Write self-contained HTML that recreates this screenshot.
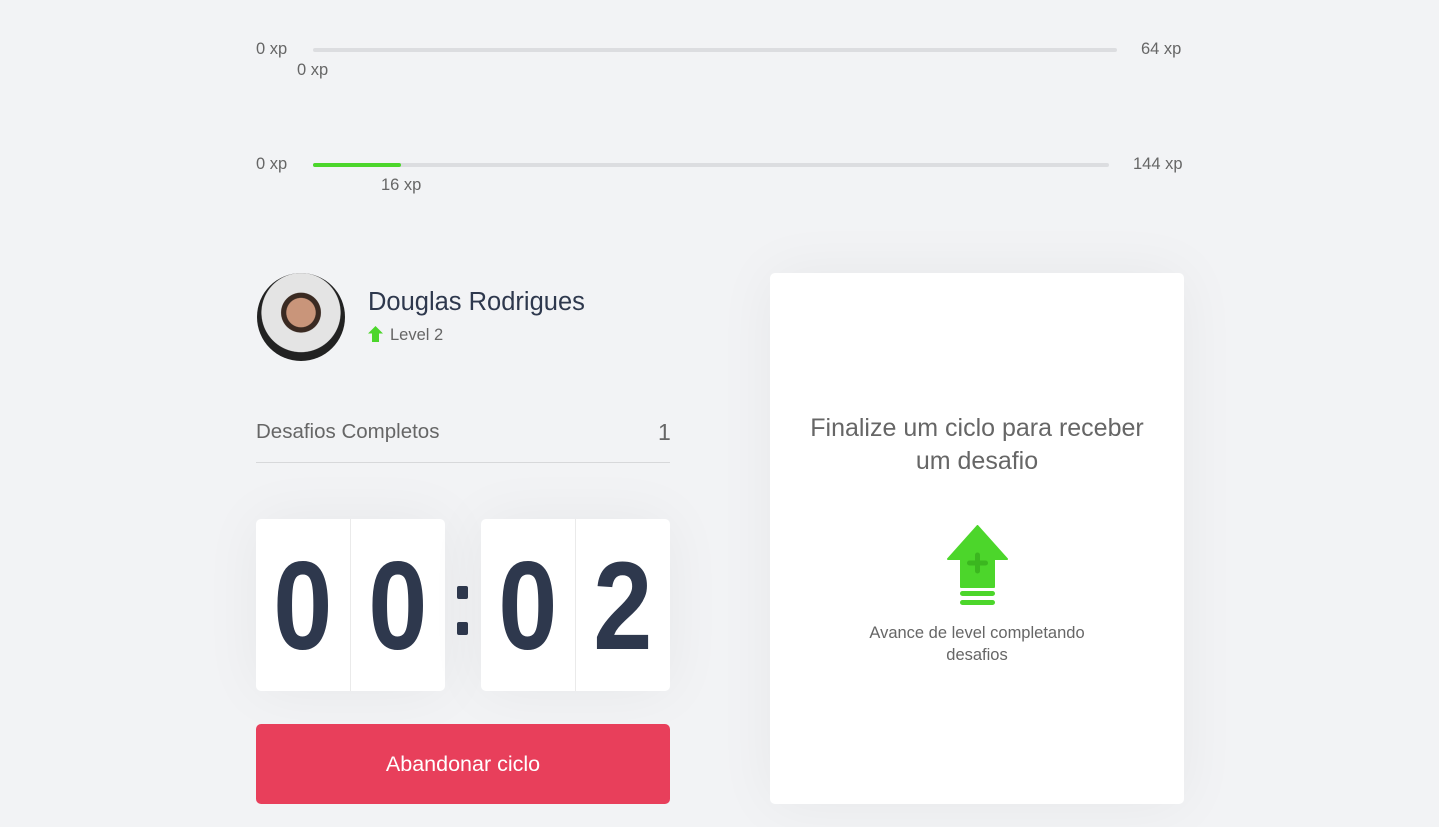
<!DOCTYPE html>
<html><head><style>
body{margin:0;background:#f2f3f5;font-family:"Liberation Sans",sans-serif;color:#666;width:1439px;height:827px;overflow:hidden;position:relative}
.a{position:absolute}
.bar{position:absolute;height:4px;background:#dcdde0;border-radius:4px}
.t{font-size:16.5px;color:#666}
.box{position:absolute;top:519px;width:189px;height:172px;background:#fff;border-radius:5px;box-shadow:0 0 60px rgba(0,0,0,0.05);display:flex;font-size:125px;color:#2e384d;font-weight:bold}
.box span{flex:1;text-align:center;line-height:176px;display:block}
.box span i{display:inline-block;font-style:normal;transform:scaleX(0.85)}
.box span:first-child{border-right:1px solid #eaeaea}
</style></head><body>
<div class="a t" style="left:256px;top:40px">0 xp</div>
<div class="bar" style="left:313px;top:48px;width:804px"></div>
<div class="a t" style="left:1141px;top:40px">64 xp</div>
<div class="a t" style="left:297px;top:61px">0 xp</div>

<div class="a t" style="left:256px;top:155px">0 xp</div>
<div class="bar" style="left:313px;top:163px;width:796px"></div>
<div class="bar" style="left:313px;top:163px;width:88px;background:#4cd62b"></div>
<div class="a t" style="left:1133px;top:155px">144 xp</div>
<div class="a t" style="left:381px;top:176px">16 xp</div>

<div class="a" style="left:257px;top:273px;width:88px;height:88px;border-radius:50%;background:radial-gradient(circle at 50% 45%,#c9957a 0 22%,#3a2a22 23% 30%,#e4e4e4 31% 60%,#222 61%)"></div>
<div class="a" style="left:368px;top:288px;font-size:25.5px;color:#2e384d">Douglas Rodrigues</div>
<svg class="a" style="left:368px;top:326px" width="15" height="16" viewBox="0 0 15 16"><path d="M7.5 0L15 7.5H11V16H4V7.5H0Z" fill="#4cd62b"/></svg>
<div class="a" style="left:390px;top:326px;font-size:16.5px;color:#666">Level 2</div>

<div class="a" style="left:256px;top:420px;font-size:20.5px;color:#666">Desafios Completos</div>
<div class="a" style="left:658px;top:419px;font-size:23px;color:#666">1</div>
<div class="a" style="left:256px;top:462px;width:414px;height:1px;background:#d7d8da"></div>

<div class="box" style="left:256px"><span><i>0</i></span><span><i>0</i></span></div>
<div class="a" style="left:457px;top:586px;width:11px;height:13px;background:#2e384d;border-radius:2px"></div>
<div class="a" style="left:457px;top:622px;width:11px;height:13px;background:#2e384d;border-radius:2px"></div>
<div class="box" style="left:481px"><span><i>0</i></span><span><i>2</i></span></div>

<div class="a" style="left:256px;top:724px;width:414px;height:80px;background:#e83f5b;border-radius:5px;color:#fff;font-size:21.5px;text-align:center;line-height:80px">Abandonar ciclo</div>

<div class="a" style="left:770px;top:273px;width:414px;height:531px;background:#fff;border-radius:5px;box-shadow:0 0 60px rgba(0,0,0,0.05)">
<div class="a" style="left:0;top:139px;width:414px;text-align:center;font-size:25px;line-height:33px;color:#666">Finalize um ciclo para receber<br>um desafio</div>
<svg class="a" style="left:177px;top:252px" width="61" height="82" viewBox="0 0 61 82"><path d="M30.5 1L60 34H47V62H14V34H1Z" fill="#4cd62b" stroke="#4cd62b" stroke-linejoin="round" stroke-width="2"/><path d="M30.5 30V46M22.5 38H38.5" stroke="#3bb71f" stroke-width="5" stroke-linecap="round"/><rect x="13" y="66" width="35" height="5" rx="2.5" fill="#4cd62b"/><rect x="13" y="75" width="35" height="5" rx="2.5" fill="#4cd62b"/></svg>
<div class="a" style="left:0;top:349px;width:414px;text-align:center;font-size:16.5px;line-height:22px;color:#666">Avance de level completando<br>desafios</div>
</div>
</body></html>
